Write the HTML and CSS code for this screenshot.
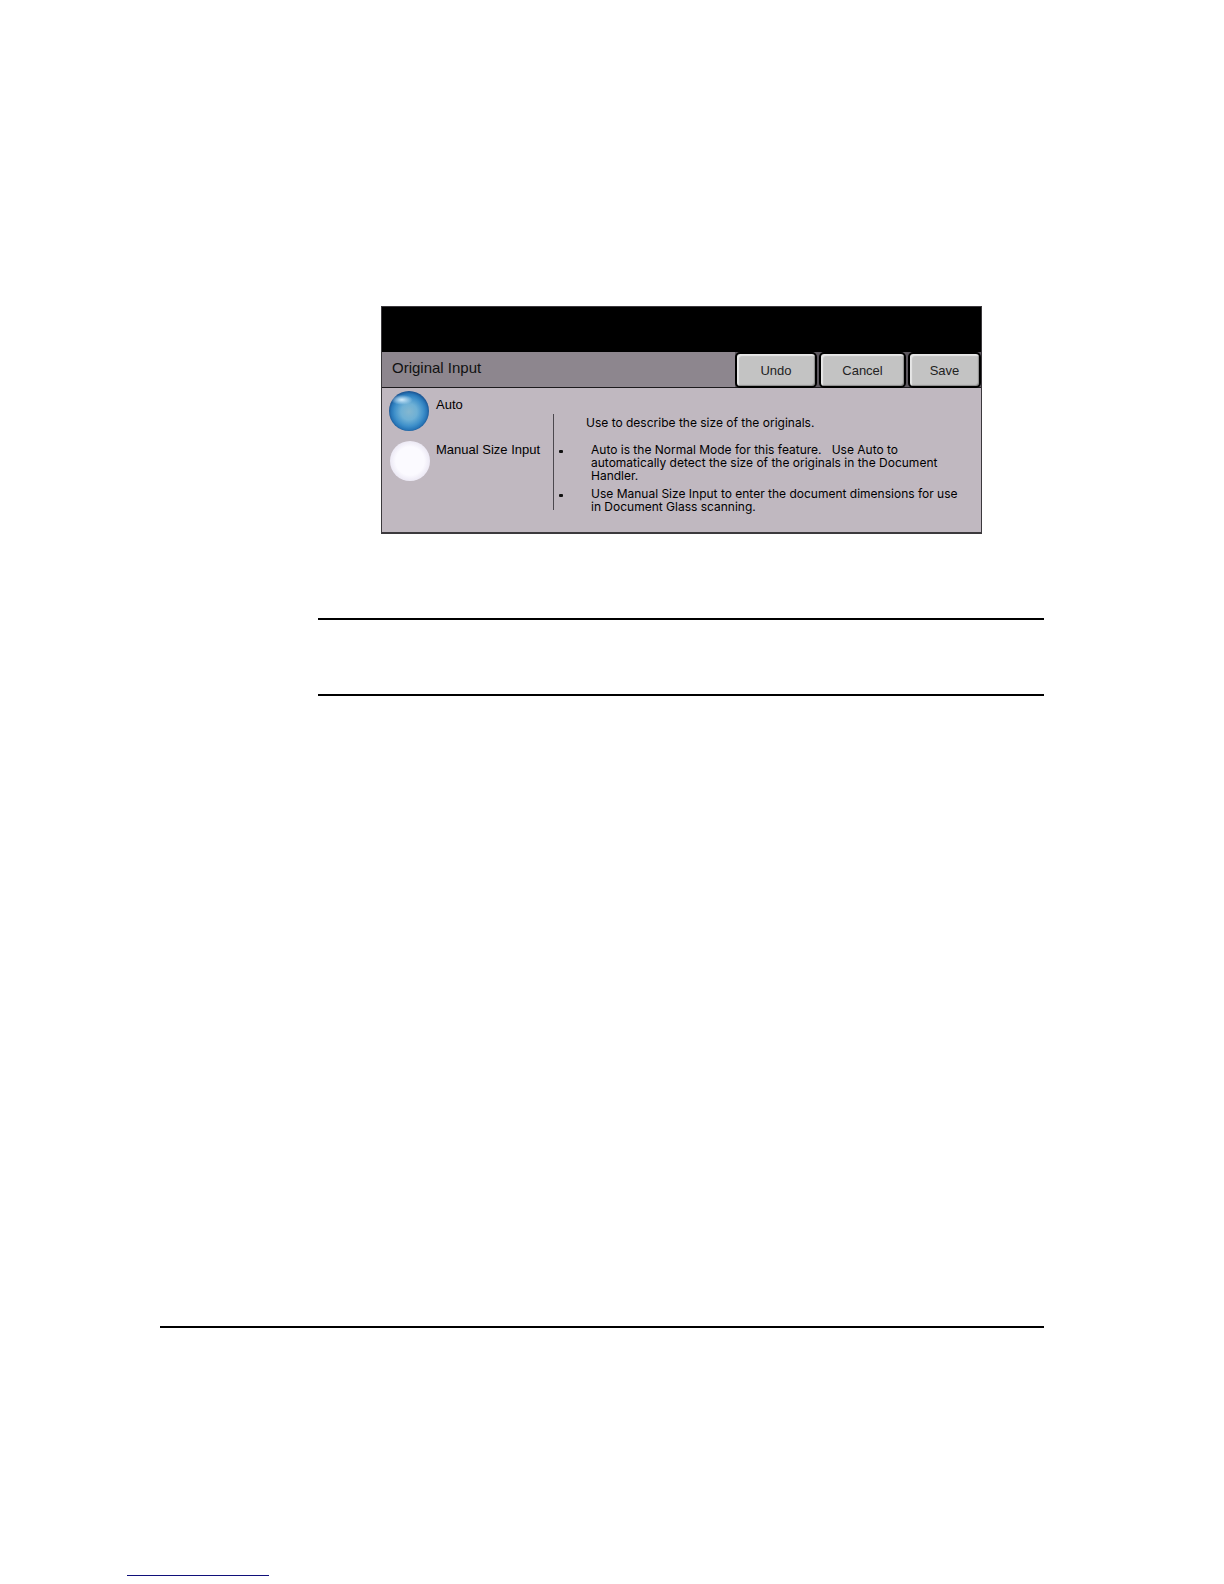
FILE: index.html
```html
<!DOCTYPE html>
<html lang="en">
<head>
<meta charset="utf-8">
<title>Original Input</title>
<link rel="stylesheet" href="styles.css">
</head>
<body>
<main class="page">
  <div class="content">
    <form class="panel">
      <div class="panel-top"></div>
      <header class="panel-bar">
        <h1 class="panel-title">Original Input</h1>
        <div class="actions">
          <button class="btn btn-undo" type="button">Undo</button>
          <button class="btn btn-cancel" type="button">Cancel</button>
          <button class="btn btn-save" type="button">Save</button>
        </div>
      </header>
      <div class="panel-body">
        <div class="options">
          <label class="option"><input class="orb" type="radio" name="size" checked><span class="option-text">Auto</span></label>
          <label class="option option-manual"><input class="orb" type="radio" name="size"><span class="option-text">Manual Size Input</span></label>
        </div>
        <section class="help">
          <p class="help-intro">Use to describe the size of the originals.</p>
          <ul class="help-list">
            <li>Auto is the Normal Mode for this feature. &nbsp; Use Auto to<br>automatically detect the size of the originals in the Document<br>Handler.</li>
            <li>Use Manual Size Input to enter the document dimensions for use<br>in Document Glass scanning.</li>
          </ul>
        </section>
      </div>
    </form>
    <div class="note"></div>
  </div>
  <footer class="footer"></footer>
  <a class="page-link" href="#" aria-label="Home"></a>
</main>
</body>
</html>
```
FILE: styles.css
```css
* { box-sizing: border-box; }

body {
  margin: 0;
  background: #fff;
  color: #111;
  font-family: "Liberation Sans", Arial, sans-serif;
}

.page {
  display: flex;
  flex-direction: column;
  min-height: 100vh;
  padding: 306px 180px 8px 160px;
}

.content { flex: 1; padding-left: 158px; }

.panel {
  margin: 0 62px 0 63px;
  border: 1px solid #3c393d;
  border-bottom-width: 2px;
  background: #c0b8c0;
}

.panel-top { height: 45px; background: #000; }

.panel-bar {
  display: flex;
  justify-content: space-between;
  height: 36px;
  border-bottom: 1px solid #1c1a1d;
  background: #8d868e;
}

.panel-title {
  margin: 0;
  padding-left: 10px;
  font-size: 15px;
  font-weight: 400;
  line-height: 32px;
}

.actions { display: flex; gap: 2px; background: #5c575e; }

.btn {
  height: 36px;
  padding: 0;
  border: 2px solid #000;
  border-radius: 5px;
  background: #c3c3c3;
  box-shadow: inset 2px 2px 1px #e6e6e6, inset -1px -1px 1px #8c8c8c;
  color: #222;
  font-family: inherit;
  font-size: 13px;
}

.btn-undo { width: 82px; }
.btn-cancel { width: 87px; }
.btn-save { width: 73px; }

.panel-body { display: flex; min-height: 144px; }

.options {
  display: flex;
  flex-direction: column;
  gap: 10px;
  width: 171px;
  padding: 3px 0 0 7px;
}

.option { display: flex; gap: 7px; color: #000; }
.option-text { padding-top: 6px; font-size: 13px; line-height: 15px; white-space: nowrap; }
.option-manual { gap: 6px; padding-left: 1px; }
.option-manual .option-text { padding-top: 1px; }

.orb {
  appearance: none;
  flex: none;
  width: 40px;
  height: 40px;
  margin: 0;
  border-radius: 50%;
  background: radial-gradient(circle, #fbfaff 50%, #eeebf6 68%, #dcd8e4 100%);
}

.orb:checked {
  background:
    radial-gradient(ellipse 11px 5px at 32% 22%, #d4edfb 0%, #8cc3e600 100%),
    radial-gradient(circle at 50% 52%, #84b7d0 0%, #6eb0d5 28%, #3f90ca 50%, #2877b8 62%, #1c5795 70%);
}

.help {
  flex: 1;
  align-self: flex-start;
  height: 96px;
  margin-top: 26px;
  border-left: 1px solid #4c484e;
  color: #000;
  font-family: Inter, sans-serif;
  font-size: 12px;
  line-height: 13px;
}

.help-intro { margin: 2px 0 14px 32px; }
.help-list { margin: 0; padding: 0; list-style: none; }
.help-list li { position: relative; margin-bottom: 5px; padding-left: 37px; white-space: nowrap; }

.help-list li::before {
  content: "";
  position: absolute;
  left: 5px;
  top: 7px;
  width: 4px;
  height: 3px;
  border-radius: 1px;
  background: #111;
}

.note {
  height: 78px;
  margin-top: 84px;
  border-top: 2px solid #000;
  border-bottom: 2px solid #000;
}

.footer { height: 249px; border-top: 2px solid #000; }

.page-link {
  width: 142px;
  height: 1px;
  margin-left: -33px;
  background: #10107a;
}
```
